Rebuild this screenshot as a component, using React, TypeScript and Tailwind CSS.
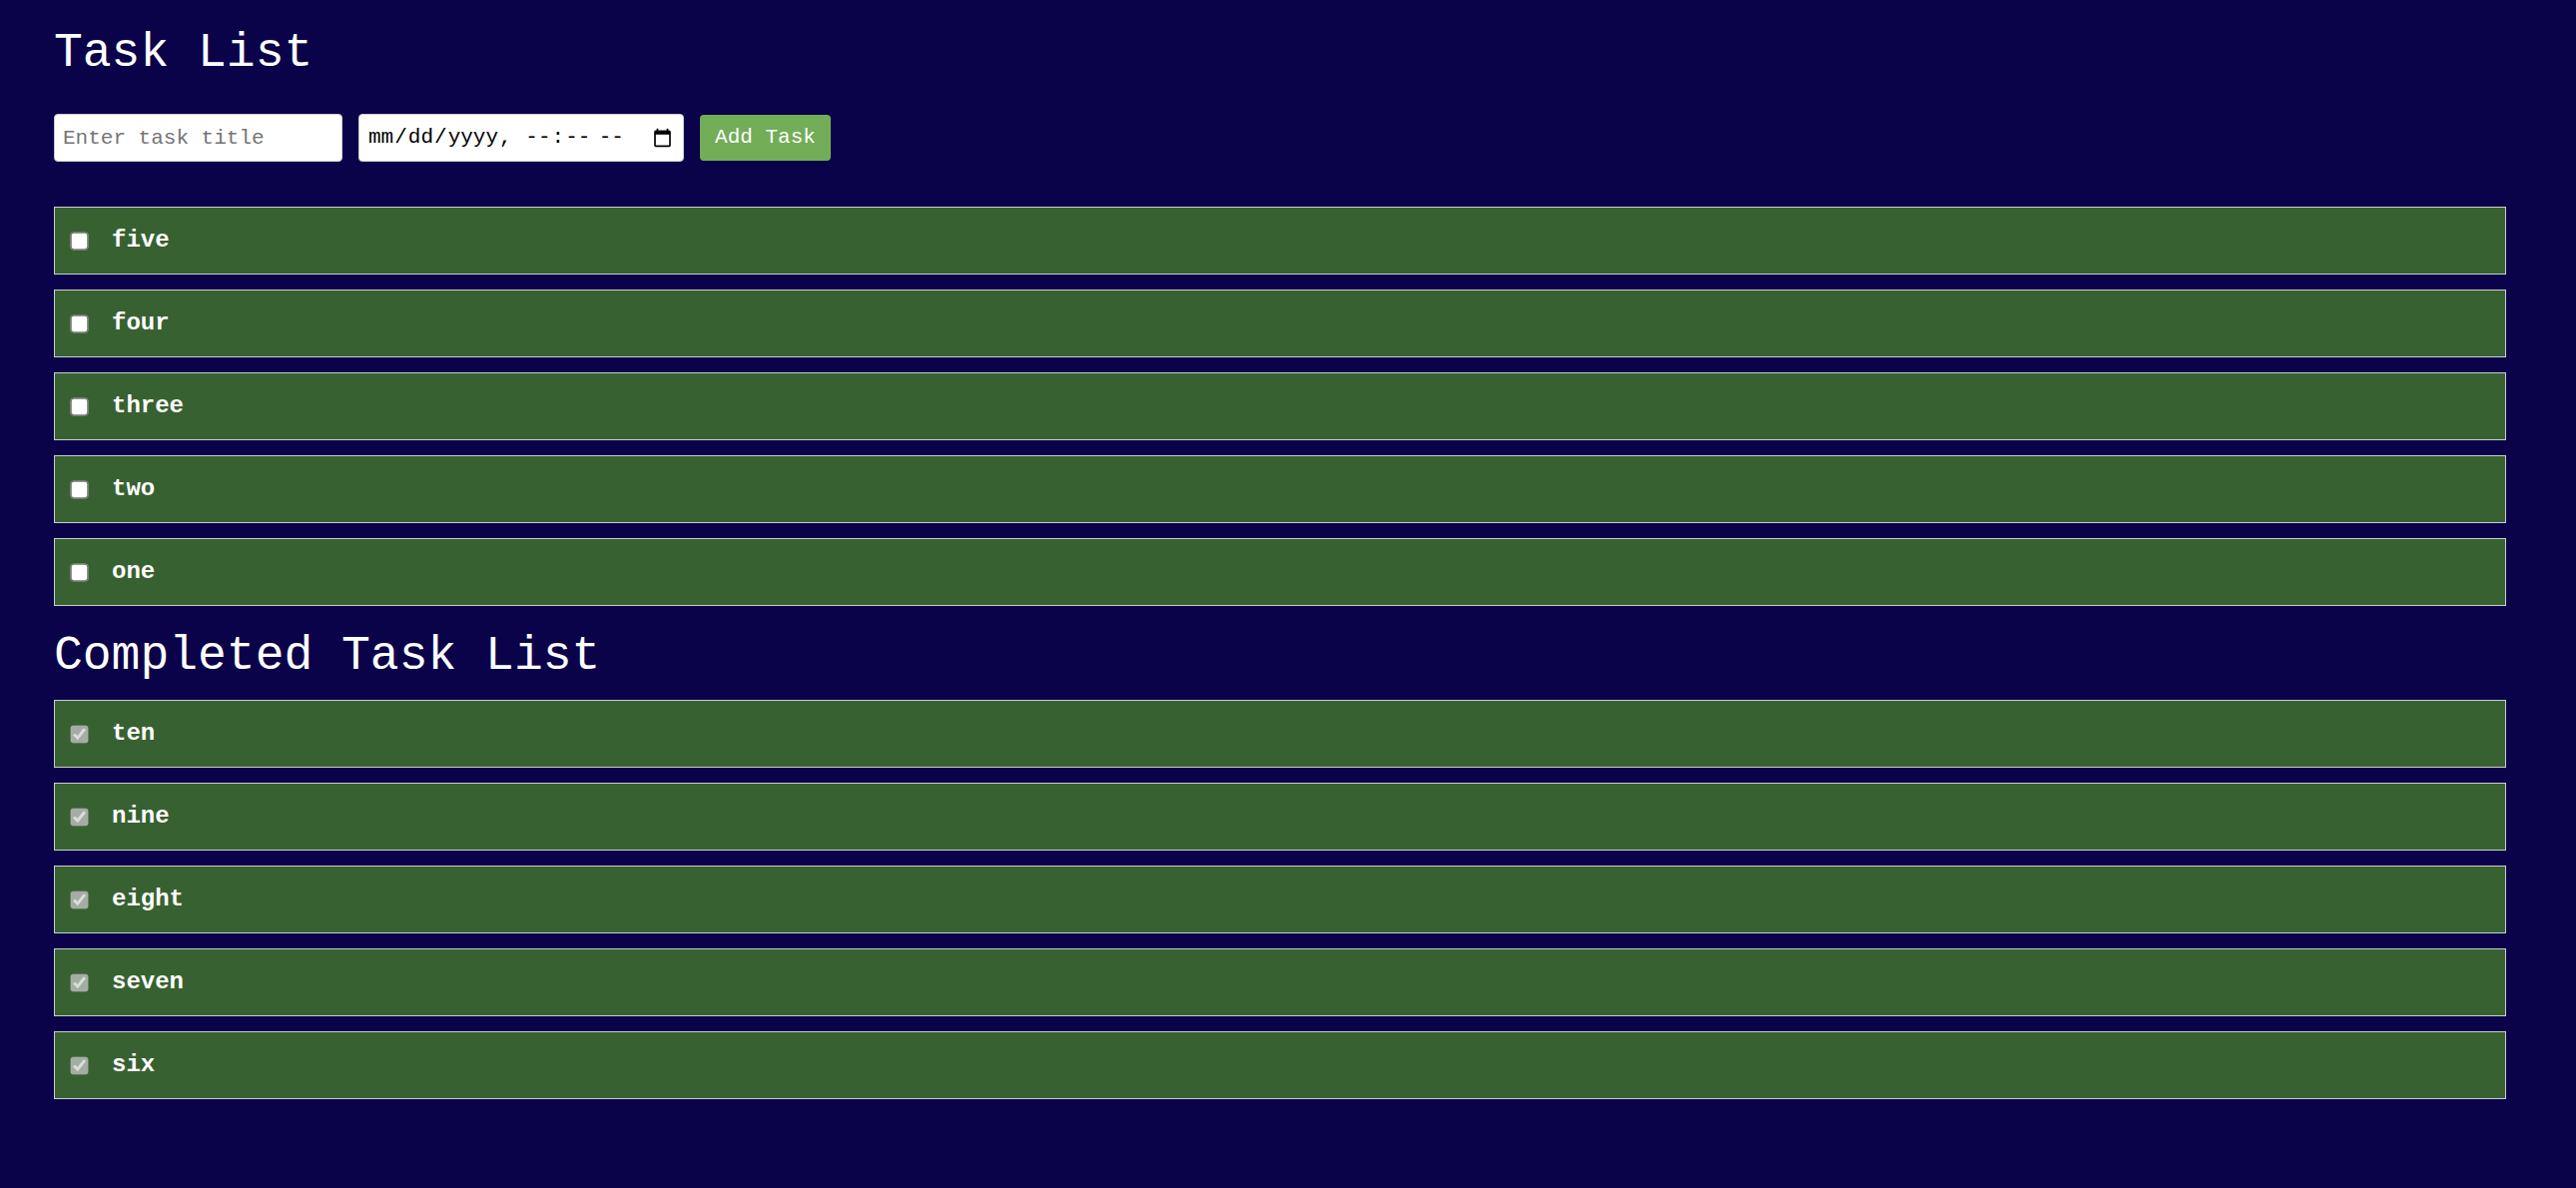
import React from "react";

const todo = ["five", "four", "three", "two", "one"];
const done = ["ten", "nine", "eight", "seven", "six"];

function Item({ label, completed }: { label: string; completed: boolean }) {
  return (
    <li className="flex items-center h-[68px] mb-[15px] border border-[#cccccc] bg-[#386131] pl-[18px]">
      <input
        type="checkbox"
        className="m-0 w-[13px] h-[13px] scale-[1.4]"
        defaultChecked={completed}
        disabled={completed}
      />
      <span className="ml-[26px] text-[24px] font-bold text-white leading-[27px] -translate-y-[1px]">{label}</span>
    </li>
  );
}

export default function App() {
  const mono = { fontFamily: '"Liberation Mono", "Courier New", monospace' };
  return (
    <div className="min-h-[1190px] w-full bg-[#0b034a] text-white" style={mono}>
      <div className="pl-[54px] pr-[70px] pt-[26px] pb-[60px]">
        <h1 className="text-[48px] leading-[54px] font-normal m-0">Task List</h1>
        <div className="flex items-center gap-[16px] mt-[34px]">
          <input
            type="text"
            placeholder="Enter task title"
            className="w-[289px] h-[48px] px-[8px] rounded-[4px] border border-[#cccccc] bg-white text-black text-[21px] placeholder:text-[#757575] outline-none"
            style={mono}
          />
          <input
            type="datetime-local"
            className="w-[326px] h-[48px] px-[8px] rounded-[4px] border border-[#cccccc] bg-white text-black text-[21px] outline-none"
            style={mono}
          />
          <button
            className="w-[131px] h-[46px] rounded-[4px] bg-[#72ad57] text-white text-[21px]"
            style={mono}
          >
            Add Task
          </button>
        </div>
        <ul className="mt-[45px] mb-0 list-none p-0">
          {todo.map((t) => (
            <Item key={t} label={t} completed={false} />
          ))}
        </ul>
        <h2 className="text-[48px] leading-[54px] font-normal mt-[23px] mb-[17px]">Completed Task List</h2>
        <ul className="list-none p-0">
          {done.map((t) => (
            <Item key={t} label={t} completed={true} />
          ))}
        </ul>
      </div>
    </div>
  );
}
